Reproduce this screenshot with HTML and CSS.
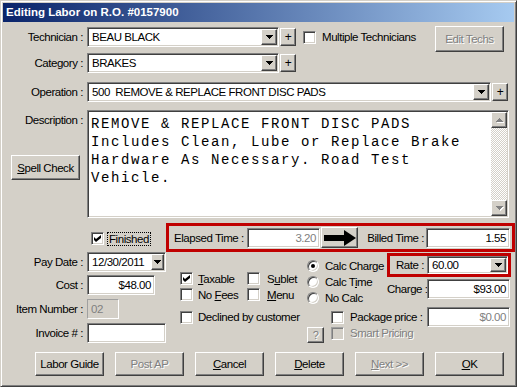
FILE: index.html
```html
<!DOCTYPE html>
<html lang="en">
<head>
  <meta charset="UTF-8">
  <meta name="viewport" content="width=device-width, initial-scale=1.0"/>
  <title>Editing Labor</title>
  <link rel="stylesheet" href="styles.css">
</head>
<body>
<div class="window">
  <div class="titlebar">Editing Labor on R.O. #0157900</div>
  <div class="content">

    <div class="row">
      <span class="lbl">Technician :</span>
      <div class="field combo tech-combo">
        <span class="val">BEAU BLACK</span>
        <span class="btn drop"><svg width="7" height="4" viewBox="0 0 7 4"><path d="M0 0h7v1h-1v1h-1v1h-1v1h-1v-1h-1v-1h-1v-1h-1z"/></svg></span>
      </div>
      <span class="btn plus">+</span>
      <span class="ck multi"></span><span class="ct multi-text">Multiple Technicians</span>
      <span class="btn off edit-techs">Edit Techs</span>
    </div>

    <div class="row cat-row">
      <span class="lbl">Category :</span>
      <div class="field combo tech-combo">
        <span class="val">BRAKES</span>
        <span class="btn drop"><svg width="7" height="4" viewBox="0 0 7 4"><path d="M0 0h7v1h-1v1h-1v1h-1v1h-1v-1h-1v-1h-1v-1h-1z"/></svg></span>
      </div>
      <span class="btn plus">+</span>
    </div>

    <div class="row op-row">
      <span class="lbl">Operation :</span>
      <div class="field combo op-combo">
        <span class="val">500&nbsp; REMOVE &amp; REPLACE FRONT DISC PADS</span>
        <span class="btn drop"><svg width="7" height="4" viewBox="0 0 7 4"><path d="M0 0h7v1h-1v1h-1v1h-1v1h-1v-1h-1v-1h-1v-1h-1z"/></svg></span>
      </div>
      <span class="btn plus">+</span>
    </div>

    <div class="desc-row">
      <div class="desc-side">
        <div class="lbl desc-lbl">Description :</div>
        <span class="btn spell"><u>S</u>pell Check</span>
      </div>
      <div class="memo">
        <div class="memo-text">REMOVE &amp; REPLACE FRONT DISC PADS<br>Includes Clean, Lube or Replace Brake<br>Hardware As Necessary. Road Test<br>Vehicle.</div>
        <div class="vscroll">
          <span class="btn sbtn"><svg width="7" height="4" viewBox="0 0 7 4"><path class="grey" d="M3 0h1v1h1v1h1v1h1v1h-7v-1h1v-1h1v-1h1z"/></svg></span>
          <span class="track"></span>
          <span class="btn sbtn"><svg width="7" height="4" viewBox="0 0 7 4"><path class="grey" d="M0 0h7v1h-1v1h-1v1h-1v1h-1v-1h-1v-1h-1v-1h-1z"/></svg></span>
        </div>
      </div>
    </div>

    <div class="lower">
      <div class="lcol">
        <div class="fin-row">
          <span class="ck"><svg width="7" height="7" viewBox="0 0 7 7"><path d="M0 2l2 2 5-4v3l-5 4-2-2z"/></svg></span>
          <span class="focus">Finished</span>
        </div>
        <div class="frow pay">
          <span class="lbl">Pay Date :</span>
          <div class="field combo date">
            <span class="val">12/30/2011</span>
            <span class="btn drop date-drop"><svg width="7" height="4" viewBox="0 0 7 4"><path d="M0 0h7v1h-1v1h-1v1h-1v1h-1v-1h-1v-1h-1v-1h-1z"/></svg></span>
          </div>
        </div>
        <div class="frow cost">
          <span class="lbl">Cost :</span>
          <span class="field num cost-in">$48.00</span>
        </div>
        <div class="frow item">
          <span class="lbl">Item Number :</span>
          <span class="field disabled item-in">02</span>
        </div>
        <div class="frow inv">
          <span class="lbl">Invoice # :</span>
          <span class="field inv-in"></span>
        </div>
      </div>

      <div class="rcol">
        <div class="redbox time-box">
          <span class="el-lbl">Elapsed Time :</span>
          <span class="field num grey-text el-in">3.20</span>
          <span class="btn arrow"><svg width="32" height="16" viewBox="0 0 32 16"><path d="M0 5h20V0l12 8-12 8v-5H0z"/></svg></span>
          <span class="bt-lbl">Billed Time :</span>
          <span class="field num bt-in">1.55</span>
        </div>

        <div class="mid">
          <div class="cola">
            <div class="crow">
              <span class="opt1"><span class="ck"><svg width="7" height="7" viewBox="0 0 7 7"><path d="M0 2l2 2 5-4v3l-5 4-2-2z"/></svg></span><span class="ct"><u>T</u>axable</span></span>
              <span class="ck"></span><span class="ct ct2">S<u>u</u>blet</span>
            </div>
            <div class="crow">
              <span class="opt1"><span class="ck"></span><span class="ct">No <u>F</u>ees</span></span>
              <span class="ck"></span><span class="ct ct2"><u>M</u>enu</span>
            </div>
          </div>
          <div class="colb">
            <div class="rrow"><span class="radio on"></span><span class="rt">Calc Char<u>g</u>e</span></div>
            <div class="rrow"><span class="radio"></span><span class="rt">Calc T<u>i</u>me</span></div>
            <div class="rrow"><span class="radio"></span><span class="rt">No Calc</span></div>
          </div>
          <div class="colc">
            <div class="redbox rate-box">
              <span class="rate-lbl">Rate :</span>
              <div class="field combo rate-combo">
                <span class="val">60.00</span>
                <span class="btn drop"><svg width="7" height="4" viewBox="0 0 7 4"><path d="M0 0h7v1h-1v1h-1v1h-1v1h-1v-1h-1v-1h-1v-1h-1z"/></svg></span>
              </div>
            </div>
            <div class="charge-row">
              <span class="ch-lbl">Charge :</span>
              <span class="field num ch-in">$93.00</span>
            </div>
          </div>
        </div>

        <div class="pkg-row">
          <span class="decl"><span class="ck"></span><span class="ct">Declined by customer</span></span>
          <span class="ck"></span>
          <span class="pkg-lbl">Package price :</span>
          <span class="field num grey-text ch-in">$0.00</span>
        </div>

        <div class="smart-row">
          <span class="btn off q">?</span>
          <span class="ck ck-off"></span>
          <span class="ct off smart">Smart Pricing</span>
        </div>
      </div>
    </div>

    <div class="buttons">
      <span class="btn big">Labor Guide</span>
      <span class="btn big off">Post AP</span>
      <span class="btn big"><u>C</u>ancel</span>
      <span class="btn big"><u>D</u>elete</span>
      <span class="btn big off"><u>N</u>ext &gt;&gt;</span>
      <span class="btn big"><u>O</u>K</span>
    </div>

  </div>
</div>
</body>
</html>
```

FILE: styles.css
```css
body {
  margin: 0;
  background: #d4d0c8;
}

.window {
  width: 517px;
  height: 387px;
  box-sizing: border-box;
  background: #d4d0c8;
  border: 1px solid;
  border-color: #d4d0c8 #404040 #404040 #d4d0c8;
  box-shadow: inset 1px 1px #fff, inset -1px -1px #808080;
  padding: 2px;
  font-family: "Liberation Sans", Arial, sans-serif;
  font-size: 11.5px;
  letter-spacing: -0.45px;
  color: #000;
}

.titlebar {
  height: 19px;
  line-height: 19px;
  padding-left: 3px;
  background: linear-gradient(to right, #0a246a, #a6caf0);
  color: #fff;
  font-weight: bold;
  letter-spacing: 0;
}

.content {
  padding-top: 5px;
}

u {
  text-decoration: underline;
  text-underline-offset: 1px;
}

/* generic controls */
.field {
  box-sizing: border-box;
  height: 20px;
  background: #fff;
  border: 1px solid;
  border-color: #808080 #fff #fff #808080;
  box-shadow: inset 1px 1px #404040, inset -1px -1px #d4d0c8;
  padding: 1px 1px 1px 4px;
  display: flex;
  align-items: center;
  white-space: nowrap;
  overflow: hidden;
  flex: none;
}
.field.num {
  justify-content: flex-end;
  padding-right: 3px;
}
.combo .val {
  flex: 1;
}
.btn {
  box-sizing: border-box;
  background: #d4d0c8;
  border: 1px solid;
  border-color: #fff #404040 #404040 #fff;
  box-shadow: inset -1px -1px #808080, inset 1px 1px #d4d0c8;
  display: flex;
  align-items: center;
  justify-content: center;
  flex: none;
  white-space: nowrap;
}
.off {
  color: #808080;
  text-shadow: 1px 1px #fff;
}
.grey-text {
  color: #808080;
}
.drop {
  width: 16px;
  height: 16px;
}
.ck {
  box-sizing: border-box;
  width: 13px;
  height: 13px;
  background: #fff;
  border: 1px solid;
  border-color: #808080 #fff #fff #808080;
  box-shadow: inset 1px 1px #404040, inset -1px -1px #d4d0c8;
  display: flex;
  align-items: center;
  justify-content: center;
  flex: none;
}
.ck-off {
  background: #d4d0c8;
}
.ct {
  margin-left: 5px;
  white-space: nowrap;
}
.grey {
  fill: #808080;
}

/* top rows */
.row {
  display: flex;
  align-items: center;
  height: 20px;
}
.cat-row {
  margin-top: 6px;
}
.op-row {
  margin-top: 9px;
}
.lbl {
  flex: none;
  width: 80px;
  margin-right: 4px;
  text-align: right;
  white-space: nowrap;
}
.tech-combo {
  width: 192px;
}
.op-combo {
  width: 404px;
}
.plus {
  width: 16px;
  height: 18px;
  margin-left: 1px;
  font-size: 12px;
}
.multi {
  margin-left: 7px;
}
.multi-text {
  margin-left: 6px;
}
.edit-techs {
  width: 69px;
  height: 26px;
  margin-left: auto;
  margin-right: 10px;
  align-self: flex-start;
  margin-top: -1px;
}

/* description */
.desc-row {
  display: flex;
  align-items: flex-start;
  height: 108px;
  margin-top: 8px;
}
.desc-side {
  width: 84px;
  flex: none;
}
.desc-lbl {
  margin-top: 3px;
  line-height: 14px;
}
.spell {
  width: 69px;
  height: 25px;
  margin: 28px 0 0 8px;
}
.memo {
  box-sizing: border-box;
  width: 422px;
  height: 108px;
  background: #fff;
  border: 1px solid;
  border-color: #808080 #fff #fff #808080;
  box-shadow: inset 1px 1px #404040, inset -1px -1px #d4d0c8;
  padding: 1px;
  display: flex;
}
.memo-text {
  flex: 1;
  padding: 3px 2px 0;
  font-family: "Liberation Mono", "Courier New", monospace;
  font-size: 14px;
  letter-spacing: 1.6px;
  line-height: 18px;
  white-space: nowrap;
  color: #000;
}
.vscroll {
  width: 16px;
  display: flex;
  flex-direction: column;
}
.sbtn {
  width: 16px;
  height: 16px;
}
.sbtn svg {
  filter: drop-shadow(1px 1px 0 #fff);
}
.track {
  flex: 1;
  background: repeating-conic-gradient(#fff 0 25%, #d4d0c8 0 50%) 0 0 / 2px 2px;
}

/* lower area */
.lower {
  display: flex;
  margin-top: 5px;
}
.lcol {
  width: 163px;
  flex: none;
  padding-top: 9px;
}
.fin-row {
  display: flex;
  align-items: center;
  height: 13px;
  padding-left: 88px;
}
.focus {
  margin-left: 3px;
  padding: 0 1px;
  border: 1px dotted #000;
  line-height: 12px;
}
.frow {
  display: flex;
  align-items: center;
  height: 20px;
}
.pay {
  margin-top: 7px;
}
.cost {
  margin-top: 3px;
}
.item,
.inv {
  margin-top: 4px;
}
.date {
  width: 79px;
}
.date-drop {
  width: 13px;
}
.cost-in {
  width: 68px;
}
.item-in {
  width: 32px;
  background: #d4d0c8;
  color: #808080;
  padding-left: 3px;
  border-color: #a0a0a0 #fff #fff #a0a0a0;
  box-shadow: none;
}
.inv-in {
  width: 79px;
}

.rcol {
  width: 349px;
  flex: none;
}
.redbox {
  box-sizing: border-box;
  border: 3px solid #c00000;
  display: flex;
  align-items: center;
}
.time-box {
  height: 29px;
  padding-left: 5px;
}
.el-lbl {
  width: 73px;
  white-space: nowrap;
}
.el-in {
  width: 73px;
}
.arrow {
  width: 37px;
  height: 21px;
  margin-left: 1px;
}
.bt-lbl {
  box-sizing: border-box;
  width: 68px;
  padding-right: 2px;
  text-align: right;
  white-space: nowrap;
}
.bt-in {
  width: 84px;
}

.mid {
  display: flex;
  height: 48px;
}
.cola {
  box-sizing: border-box;
  width: 139px;
  padding: 20px 0 0 14px;
}
.crow {
  display: flex;
  align-items: center;
  height: 13px;
  margin-bottom: 3px;
}
.opt1 {
  display: flex;
  align-items: center;
  width: 67px;
}
.ct2 {
  margin-left: 7px;
}
.colb {
  box-sizing: border-box;
  width: 82px;
  padding: 6px 0 0 2px;
}
.rrow {
  display: flex;
  align-items: center;
  height: 16px;
}
.radio {
  position: relative;
  box-sizing: border-box;
  width: 12px;
  height: 12px;
  border-radius: 50%;
  background: #fff;
  border: 1px solid;
  border-color: #808080 #fff #fff #808080;
  box-shadow: inset 1px 1px #404040, inset -1px -1px #d4d0c8;
  flex: none;
}
.radio.on::after {
  content: "";
  position: absolute;
  left: 3px;
  top: 3px;
  width: 4px;
  height: 4px;
  border-radius: 50%;
  background: #000;
}
.rt {
  margin-left: 6px;
  white-space: nowrap;
}
.colc {
  width: 128px;
}
.rate-box {
  margin-top: 1px;
  width: 124px;
  height: 24px;
}
.rate-lbl {
  box-sizing: border-box;
  width: 37px;
  padding-right: 3px;
  text-align: right;
}
.rate-combo {
  width: 81px;
  height: 18px;
}
.rate-combo .drop {
  height: 14px;
}
.charge-row {
  display: flex;
  align-items: center;
  height: 20px;
  margin-top: 2px;
}
.ch-lbl {
  box-sizing: border-box;
  width: 40px;
  padding-right: 3px;
  text-align: right;
  white-space: nowrap;
}
.ch-in {
  width: 83px;
}

.pkg-row {
  display: flex;
  align-items: center;
  height: 20px;
  margin-top: 7px;
  padding-left: 14px;
}
.decl {
  display: flex;
  align-items: center;
  width: 151px;
}
.pkg-lbl {
  width: 77px;
  margin-left: 6px;
  white-space: nowrap;
}

.smart-row {
  display: flex;
  align-items: flex-start;
  height: 16px;
  padding-left: 141px;
}
.q {
  width: 17px;
  height: 16px;
  font-size: 11px;
}
.smart-row .ck {
  margin-left: 7px;
  border-color: #a0a0a0 #fff #fff #a0a0a0;
  box-shadow: inset 1px 1px #808080;
}
.smart {
  margin-left: 6px;
  line-height: 13px;
}

.buttons {
  display: flex;
  gap: 11px;
  padding-left: 32px;
  margin-top: 9px;
}
.big {
  width: 69px;
  height: 24px;
}
```
